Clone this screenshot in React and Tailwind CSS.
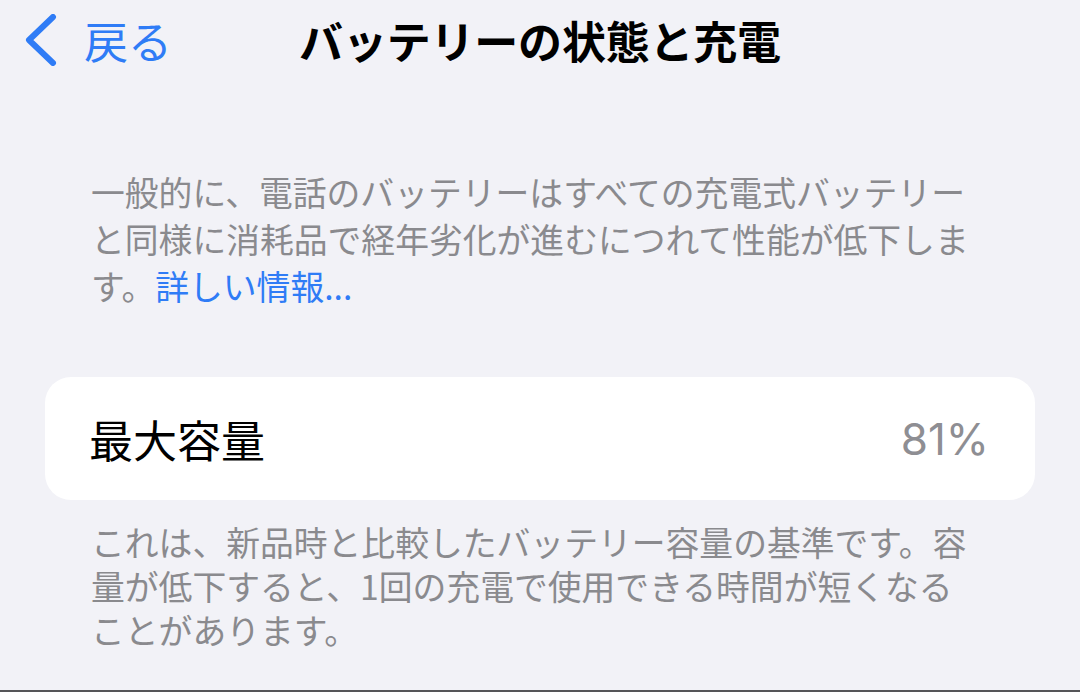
const jp = { fontFamily: '"Noto Sans CJK JP", "Noto Sans", sans-serif' };

const BackChevron = () => (
  <svg width="34" height="52" viewBox="0 0 34 52" fill="none">
    <path d="M29 3 L5 26 L29 49" stroke="#2f7cf6" strokeWidth="6" strokeLinecap="round" strokeLinejoin="round" />
  </svg>
);

const Header = () => (
  <div className="grid h-[80px] grid-cols-[1fr_auto_1fr] items-center">
    <div className="flex items-center gap-[26px] pl-[24px]">
      <BackChevron />
      <span className="text-[44px] leading-none text-[#2f7cf6]">戻る</span>
    </div>
    <h1 className="text-[44px] font-bold leading-none tracking-[-0.2px] text-black">
      バッテリーの状態と充電
    </h1>
    <div />
  </div>
);

export default function App() {
  return (
    <div
      className="flex h-[692px] w-[1080px] flex-col overflow-hidden border-b-2 border-[#555558] bg-[#f2f2f7]"
      style={jp}
    >
      <Header />

      <p className="mt-[88px] whitespace-nowrap pl-[91px] text-[33.8px] leading-[47px] text-[#8a8a8e]">
        一般的に、電話のバッテリーはすべての充電式バッテリー
        <br />
        と同様に消耗品で経年劣化が進むにつれて性能が低下しま
        <br />
        す。<span className="text-[#2f7cf6]">詳しい情報...</span>
      </p>

      <div className="mx-[45px] mt-[68px] flex h-[123px] items-center justify-between rounded-[26px] bg-white pl-[44px] pr-[46px]">
        <span className="text-[44px] leading-none text-black">最大容量</span>
        <span
          className="text-[44px] leading-none text-[#8e8e93]"
          style={{ fontFamily: 'Inter, "Noto Sans", sans-serif' }}
        >
          81%
        </span>
      </div>

      <p className="mt-[20px] whitespace-nowrap pl-[91px] text-[33.8px] leading-[44px] text-[#8a8a8e]">
        これは、新品時と比較したバッテリー容量の基準です。容
        <br />
        量が低下すると、1回の充電で使用できる時間が短くなる
        <br />
        ことがあります。
      </p>
    </div>
  );
}
